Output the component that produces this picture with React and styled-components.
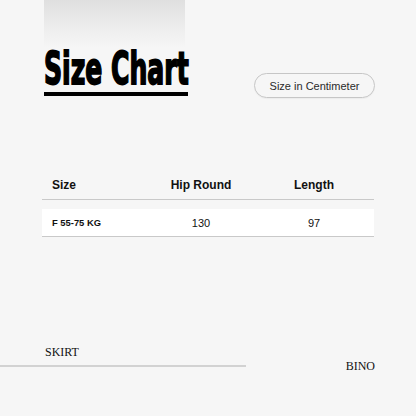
import React from 'react';
import styled, { createGlobalStyle } from 'styled-components';

const GlobalStyle = createGlobalStyle`
  html, body {
    margin: 0;
    padding: 0;
    background: #f6f6f6;
  }
  * {
    box-sizing: border-box;
  }
`;

const Page = styled.div`
  width: 416px;
  height: 416px;
  display: flex;
  flex-direction: column;
  background: #f6f6f6;
  font-family: 'Liberation Sans', Arial, sans-serif;
  color: #111;
  overflow: hidden;
`;

const Header = styled.div`
  display: flex;
  justify-content: space-between;
  align-items: flex-start;
  padding: 0 41px 0 44px;
`;

const TitleBlock = styled.div`
  width: 141px;
  padding-top: 46px;
  background: linear-gradient(to bottom, #dfdfdf 0, #ececec 25px, #f6f6f6 48px);
`;

const Title = styled.h1`
  margin: 0 0 1px 0;
  height: 45px;
  font-family: 'DejaVu Sans Condensed', 'Liberation Sans', sans-serif;
  font-size: 45px;
  line-height: 1;
  font-weight: 700;
  white-space: nowrap;
  color: #000;
  -webkit-text-stroke: 1.8px #000;
  transform: scaleX(0.62);
  transform-origin: left center;
`;

const Underline = styled.div`
  width: 144px;
  height: 4px;
  background: #000;
`;

const Pill = styled.div`
  margin-top: 73px;
  width: 121px;
  height: 25px;
  display: flex;
  align-items: center;
  justify-content: center;
  border: 1px solid #c6c6c6;
  border-radius: 13px;
  font-size: 11px;
  color: #2a2a2a;
  box-shadow: 0 1px 1px rgba(0, 0, 0, 0.04);
`;

const Table = styled.div`
  margin: 74px 42px 0 42px;
  display: flex;
  flex-direction: column;
  gap: 9px;
`;

const Row = styled.div`
  display: grid;
  grid-template-columns: 100px 98px 1fr;
  align-items: center;
  height: 28px;
  padding: ${(p) => (p.$head ? '0 0 2px 10px' : '0 0 0 10px')};
  background: ${(p) => (p.$head ? 'transparent' : '#fff')};
  border-bottom: 1px solid #c9c9c9;
`;

const HeadCell = styled.div`
  font-size: 12px;
  font-weight: 700;
  color: #111;
  text-align: ${(p) => (p.$left ? 'left' : 'center')};
  padding-left: ${(p) => (p.$last ? '4px' : '0')};
`;

const Cell = styled.div`
  font-size: ${(p) => (p.$label ? '9.4px' : '11px')};
  font-weight: ${(p) => (p.$label ? 700 : 400)};
  color: #111;
  text-align: ${(p) => (p.$label ? 'left' : 'center')};
  padding-left: ${(p) => (p.$last ? '4px' : '0')};
`;

const Footer = styled.div`
  margin-top: auto;
  margin-bottom: 43px;
  display: flex;
  align-items: flex-start;
  justify-content: space-between;
  font-family: 'Liberation Serif', 'Times New Roman', serif;
  font-size: 12px;
  line-height: 14px;
  color: #111;
`;

const FooterLeft = styled.div`
  width: 246px;
`;

const FooterLabel = styled.div`
  padding-left: 45px;
`;

const FooterLine = styled.div`
  margin-top: 6px;
  height: 2px;
  background: #d2d2d2;
`;

const Brand = styled.div`
  margin: 14px 41px 0 0;
`;

const columns = ['Size', 'Hip Round', 'Length'];
const rows = [{ size: 'F 55-75 KG', hip: '130', length: '97' }];

const App = () => {
  return (
    <Page>
      <GlobalStyle />
      <Header>
        <TitleBlock>
          <Title>Size Chart</Title>
          <Underline />
        </TitleBlock>
        <Pill>Size in Centimeter</Pill>
      </Header>

      <Table>
        <Row $head>
          {columns.map((c, i) => (
            <HeadCell key={c} $left={i === 0} $last={i === 2}>{c}</HeadCell>
          ))}
        </Row>
        {rows.map((r) => (
          <Row key={r.size}>
            <Cell $label>{r.size}</Cell>
            <Cell>{r.hip}</Cell>
            <Cell $last>{r.length}</Cell>
          </Row>
        ))}
      </Table>

      <Footer>
        <FooterLeft>
          <FooterLabel>SKIRT</FooterLabel>
          <FooterLine />
        </FooterLeft>
        <Brand>BINO</Brand>
      </Footer>
    </Page>
  );
};

export default App;
